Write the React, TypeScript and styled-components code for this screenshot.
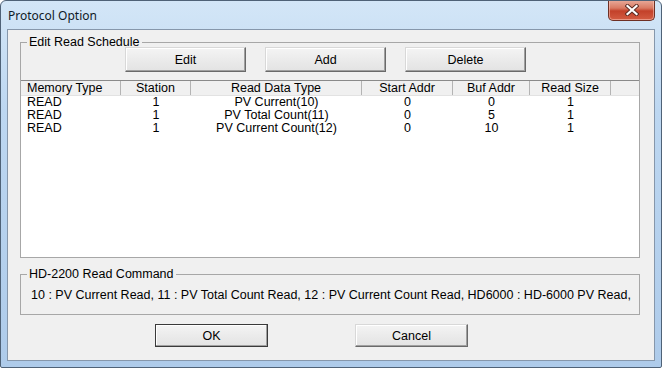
import React from "react"
import styled, { createGlobalStyle } from "styled-components"

const GlobalStyle = createGlobalStyle`
  html, body {
    margin: 0;
    padding: 0;
    background: #ffffff;
  }
  body {
    font-family: "Liberation Sans", Arial, sans-serif;
    font-size: 12.5px;
  }
`

const Window = styled.div`
  box-sizing: border-box;
  width: 662px;
  height: 368px;
  display: flex;
  flex-direction: column;
  border: 1px solid #4f6277;
  border-radius: 6px 6px 2px 2px;
  background: linear-gradient(180deg, #d3e6f7 0%, #bdd7f1 30%, #aecbea 100%);
  overflow: hidden;
`

const TitleBar = styled.div`
  height: 28px;
  display: flex;
  align-items: flex-start;
  padding-left: 7px;
`

const Title = styled.div`
  font-family: "Noto Sans", "Liberation Sans", sans-serif;
  font-size: 12px;
  line-height: 28px;
  color: #0f1a26;
  padding-top: 1px;
`

const CloseButton = styled.div`
  box-sizing: border-box;
  margin-left: auto;
  margin-right: 6px;
  margin-top: -1px;
  width: 47px;
  height: 21px;
  border: 1px solid #6e3024;
  border-top: none;
  border-radius: 0 0 5px 5px;
  background: linear-gradient(180deg, #e9ac9c 0%, #d97a63 40%, #c3412a 55%, #d35c42 100%);
  box-shadow: inset 0 0 0 1px rgba(255, 210, 200, 0.5);
  display: flex;
  align-items: center;
  justify-content: center;
`

const Client = styled.div`
  flex: 1;
  margin: 0 6px 6px 6px;
  background: #f0f0f0;
  border: 1px solid #8697ab;
  display: flex;
  flex-direction: column;
`

const Group = styled.fieldset<{ $top: number }>`
  margin: ${(p) => p.$top}px 14px 0 12px;
  padding: 0;
  border: 1px solid #a7a7a7;
  min-width: 0;
`

const Legend = styled.legend`
  margin-left: 6px;
  padding: 0 2px;
  line-height: 14px;
  font-size: 12.5px;
  color: #000;
`

const ButtonRow = styled.div`
  display: flex;
  gap: 19px;
  padding-left: 104px;
  margin-top: -2px;
`

const Button = styled.button<{ $w: number; $h: number; $default?: boolean }>`
  box-sizing: border-box;
  width: ${(p) => p.$w}px;
  height: ${(p) => p.$h}px;
  font-family: "Liberation Sans", Arial, sans-serif;
  font-size: 12.5px;
  color: #000;
  background: linear-gradient(180deg, #f4f4f4 0%, #ebebeb 50%, #e3e3e3 100%);
  border: 1px solid ${(p) => (p.$default ? "#3a3a3a" : "#d8d8d8")};
  border-right-color: ${(p) => (p.$default ? "#3a3a3a" : "#6a6a6a")};
  border-bottom-color: ${(p) => (p.$default ? "#3a3a3a" : "#6a6a6a")};
  box-shadow: inset -1px -1px 0 #a0a0a0, inset 1px 1px 0 #ffffff;
  padding: 0;
`

const List = styled.div`
  margin-top: 8px;
  height: 176px;
  background: #ffffff;
  border-top: 1px solid #8a8a8a;
`

const HeaderRow = styled.div`
  display: grid;
  grid-template-columns: 100px 70px 171px 91px 77px 81px 1fr;
  height: 14px;
  background: #f0f0f0;
  border-bottom: 1px solid #e2e2e2;
`

const HeaderCell = styled.div<{ $left?: boolean }>`
  border-right: 1px solid #b4b4b4;
  line-height: 14px;
  white-space: nowrap;
  overflow: hidden;
  padding-left: ${(p) => (p.$left ? "6px" : "0")};
  text-align: ${(p) => (p.$left ? "left" : "center")};
  &:last-child {
    border-right: none;
  }
`

const Row = styled.div`
  display: grid;
  grid-template-columns: 100px 70px 171px 91px 77px 81px 1fr;
  height: 13px;
`

const Cell = styled.div<{ $left?: boolean }>`
  line-height: 13px;
  white-space: nowrap;
  padding-left: ${(p) => (p.$left ? "6px" : "0")};
  text-align: ${(p) => (p.$left ? "left" : "center")};
`

const CommandText = styled.div`
  padding: 7px 0 12px 10px;
  line-height: 14px;
  white-space: nowrap;
`

const Footer = styled.div`
  display: flex;
  gap: 87px;
  padding-left: 147px;
  margin-top: 9px;
`

const columns = ["Memory Type", "Station", "Read Data Type", "Start Addr", "Buf Addr", "Read Size"]

const rows = [
  ["READ", "1", "PV Current(10)", "0", "0", "1"],
  ["READ", "1", "PV Total Count(11)", "0", "5", "1"],
  ["READ", "1", "PV Current Count(12)", "0", "10", "1"],
]

const CloseIcon = () => (
  <svg width="14" height="12" viewBox="0 0 14 12">
    <path d="M2.5 2 L11.5 10 M11.5 2 L2.5 10" stroke="#5a2a22" strokeWidth="4" strokeLinecap="square" />
    <path d="M2.5 2 L11.5 10 M11.5 2 L2.5 10" stroke="#ffffff" strokeWidth="2.2" strokeLinecap="square" />
  </svg>
)

export default function App() {
  return (
    <>
      <GlobalStyle />
      <Window>
        <TitleBar>
          <Title>Protocol Option</Title>
          <CloseButton>
            <CloseIcon />
          </CloseButton>
        </TitleBar>
        <Client>
          <Group $top={5}>
            <Legend>Edit Read Schedule</Legend>
            <ButtonRow>
              <Button $w={121} $h={25}>Edit</Button>
              <Button $w={121} $h={25}>Add</Button>
              <Button $w={121} $h={25}>Delete</Button>
            </ButtonRow>
            <List>
              <HeaderRow>
                {columns.map((c, i) => (
                  <HeaderCell key={c} $left={i === 0}>{c}</HeaderCell>
                ))}
                <HeaderCell />
              </HeaderRow>
              {rows.map((r, i) => (
                <Row key={i}>
                  {r.map((v, j) => (
                    <Cell key={j} $left={j === 0}>{v}</Cell>
                  ))}
                </Row>
              ))}
            </List>
          </Group>
          <Group $top={9}>
            <Legend>HD-2200 Read Command</Legend>
            <CommandText>
              10 : PV Current Read, 11 : PV Total Count Read, 12 : PV Current Count Read, HD6000 : HD-6000 PV Read,
            </CommandText>
          </Group>
          <Footer>
            <Button $w={113} $h={23} $default>OK</Button>
            <Button $w={113} $h={23}>Cancel</Button>
          </Footer>
        </Client>
      </Window>
    </>
  )
}
